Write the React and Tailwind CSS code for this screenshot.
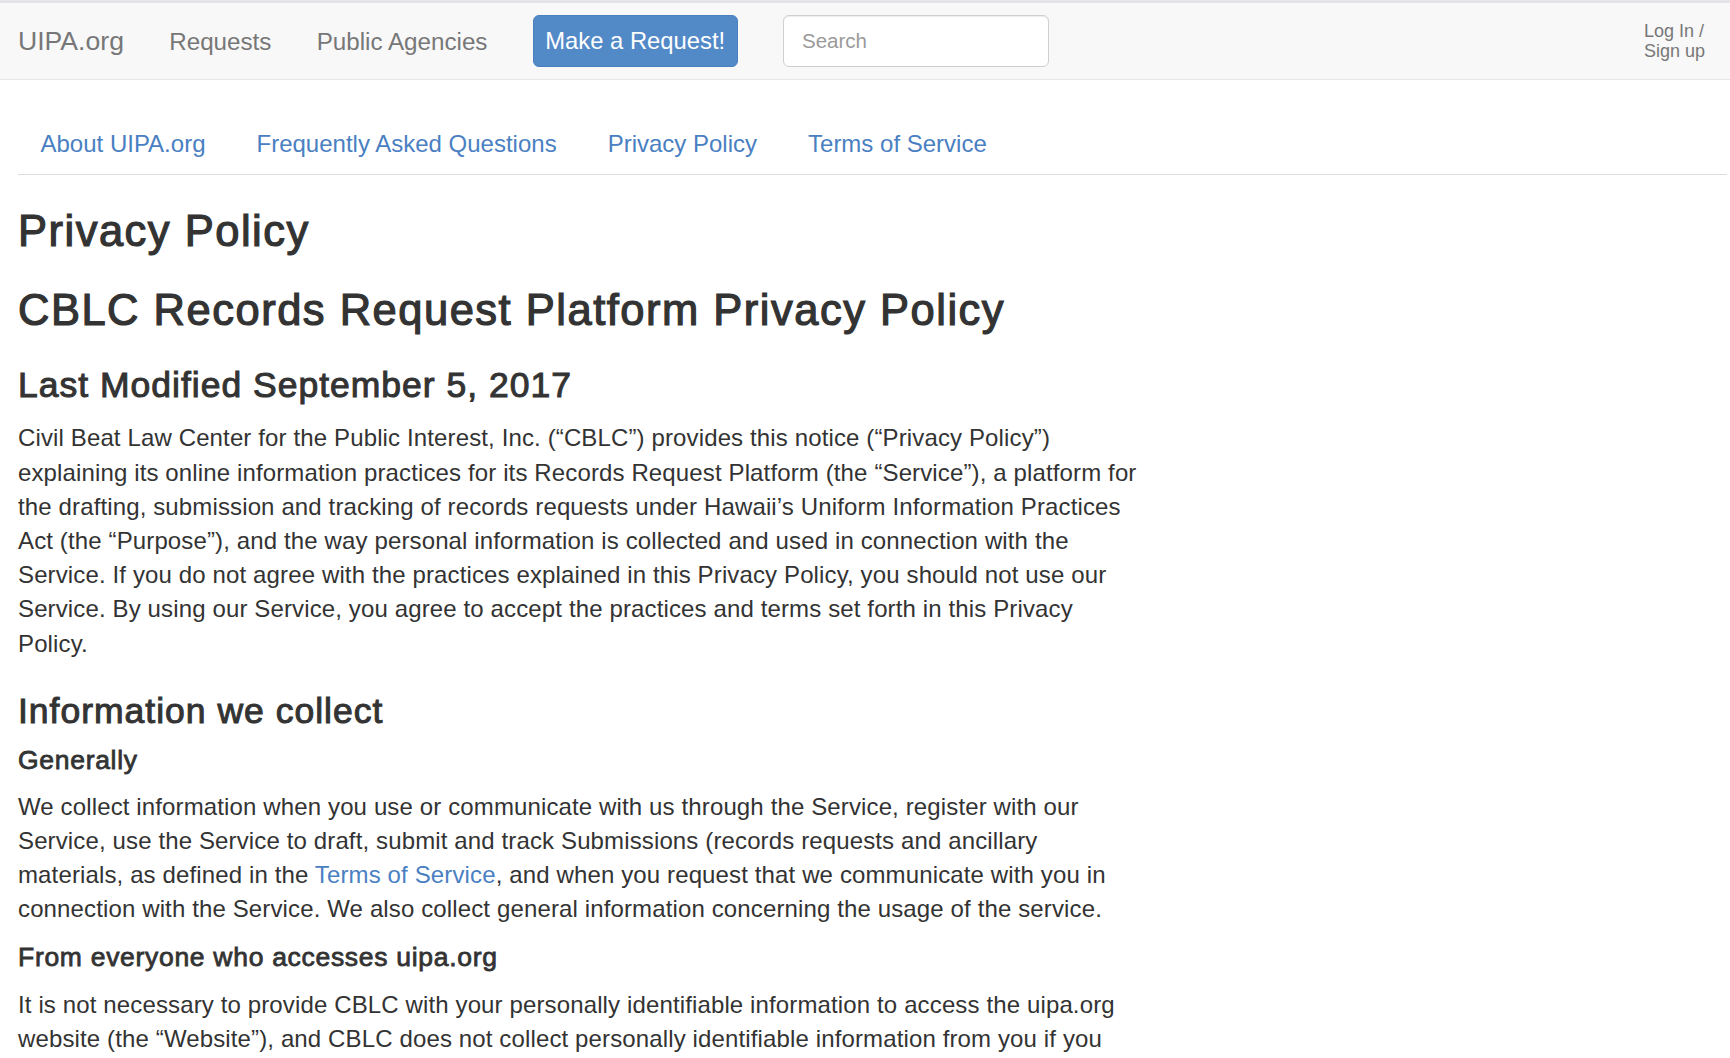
import React from "react";

const LINK = "text-[#4a80c2]";

function NavBar() {
  return (
    <div>
      <div className="h-[3px] bg-[#e4e4e8]" />
      <nav className="h-[77px] bg-[#f8f8f8] border-b border-[#e7e7e7] flex items-center pl-[18px] pr-[24px]">
        <div className="flex items-center gap-[45.3px]">
          <span className="text-[26.6px] leading-none text-[#777]">UIPA.org</span>
          <span className="pt-[2px] text-[24.2px] leading-none text-[#777]">Requests</span>
          <span className="pt-[2px] text-[24.2px] leading-none text-[#777]">Public Agencies</span>
          <button className="h-[52px] px-[11.5px] rounded-[6px] bg-[#5289c7] border border-[#4a80bf] text-white text-[23.8px] leading-none">
            Make a Request!
          </button>
          <input
            type="text"
            placeholder="Search"
            className="h-[52px] w-[266px] rounded-[6px] border border-[#cfcfcf] bg-white pl-[18px] text-[20.5px] text-[#555] placeholder:text-[#9a9a9a] shadow-[inset_0_1px_1px_rgba(0,0,0,0.075)] outline-none"
          />
        </div>
        <div className="ml-auto w-[62px] text-[18px] leading-[20px] text-[#777]">
          Log In /<br />Sign up
        </div>
      </nav>
    </div>
  );
}

function Tabs() {
  const items = ["About UIPA.org", "Frequently Asked Questions", "Privacy Policy", "Terms of Service"];
  return (
    <div className="ml-[18px] mr-[3px] mt-[32px] border-b border-[#dddddd]">
      <ul className="flex -ml-[3px]">
        {items.map((t) => (
          <li key={t}>
            <span className={`block px-[25.5px] pt-[15px] pb-[13px] text-[24px] leading-[34px] ${LINK}`}>{t}</span>
          </li>
        ))}
      </ul>
    </div>
  );
}

const H1 = "text-[43.5px] leading-[52px] font-normal tracking-[1.5px] [-webkit-text-stroke:1.2px_#333]";
const H2 = "text-[35.5px] leading-[42px] font-normal tracking-[1px] [-webkit-text-stroke:1px_#333]";
const H4 = "text-[26.5px] leading-[31px] font-normal tracking-[0.7px] [-webkit-text-stroke:0.8px_#333]";
const P = "text-[24px] leading-[34.2px] tracking-[0.13px] whitespace-nowrap";

function Body() {
  return (
    <div className="px-[18px] text-[#333] w-[1180px]">
      <h1 className={`mt-[30px] ${H1}`}>Privacy Policy</h1>
      <h1 className={`mt-[27.4px] ${H1}`}>CBLC Records Request Platform Privacy Policy</h1>
      <h2 className={`mt-[28px] ${H2}`}>Last Modified September 5, 2017</h2>
      <p className={`mt-[15px] ${P}`}>
        Civil Beat Law Center for the Public Interest, Inc. (“CBLC”) provides this notice (“Privacy Policy”)
        <br />
        explaining its online information practices for its Records Request Platform (the “Service”), a platform for
        <br />
        the drafting, submission and tracking of records requests under Hawaii’s Uniform Information Practices
        <br />
        Act (the “Purpose”), and the way personal information is collected and used in connection with the
        <br />
        Service. If you do not agree with the practices explained in this Privacy Policy, you should not use our
        <br />
        Service. By using our Service, you agree to accept the practices and terms set forth in this Privacy
        <br />
        Policy.
      </p>
      <h2 className={`mt-[29px] ${H2}`}>Information we collect</h2>
      <h4 className={`mt-[13px] ${H4}`}>Generally</h4>
      <p className={`mt-[14px] ${P}`}>
        We collect information when you use or communicate with us through the Service, register with our
        <br />
        Service, use the Service to draft, submit and track Submissions (records requests and ancillary
        <br />
        materials, as defined in the <a className={LINK}>Terms of Service</a>, and when you request that we communicate with you in
        <br />
        connection with the Service. We also collect general information concerning the usage of the service.
      </p>
      <h4 className={`mt-[15px] ${H4}`}>From everyone who accesses uipa.org</h4>
      <p className={`mt-[15px] ${P}`}>
        It is not necessary to provide CBLC with your personally identifiable information to access the uipa.org
        <br />
        website (the “Website”), and CBLC does not collect personally identifiable information from you if you
      </p>
    </div>
  );
}

export default function App() {
  return (
    <div className="min-h-screen bg-white font-['Liberation_Sans',Arial,sans-serif] overflow-hidden">
      <NavBar />
      <Tabs />
      <Body />
    </div>
  );
}
